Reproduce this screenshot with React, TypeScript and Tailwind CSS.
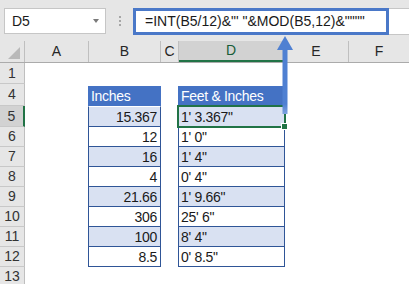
const font = "font-['Liberation_Sans',Arial,sans-serif]";

type Row = {
  label: string;
  h: string;
  b?: string;
  d?: string;
  shade?: boolean;
  kind?: "head" | "data" | "empty";
  first?: boolean;
  selected?: boolean;
};

const rows: Row[] = [
  { label: "1", h: "h-[21px]", kind: "empty" },
  { label: "4", h: "h-[22px]", kind: "head", b: "Inches", d: "Feet & Inches" },
  { label: "5", h: "h-[21px]", kind: "data", b: "15.367", d: "1' 3.367\"", shade: true, first: true, selected: true },
  { label: "6", h: "h-[20px]", kind: "data", b: "12", d: "1' 0\"" },
  { label: "7", h: "h-[20px]", kind: "data", b: "16", d: "1' 4\"", shade: true },
  { label: "8", h: "h-[20px]", kind: "data", b: "4", d: "0' 4\"" },
  { label: "9", h: "h-[20px]", kind: "data", b: "21.66", d: "1' 9.66\"", shade: true },
  { label: "10", h: "h-[20px]", kind: "data", b: "306", d: "25' 6\"" },
  { label: "11", h: "h-[20px]", kind: "data", b: "100", d: "8' 4\"", shade: true },
  { label: "12", h: "h-[20px]", kind: "data", b: "8.5", d: "0' 8.5\"" },
  { label: "13", h: "h-[20px]", kind: "empty" },
];

function TableCell({ row, col }: { row: Row; col: "b" | "d" }) {
  const w = col === "b" ? "w-[73px]" : "w-[107px]";
  if (row.kind === "head") {
    return (
      <div className={`${w} h-full flex flex-col justify-end`}>
        <div className="h-[20px] bg-[#4472c4] text-white pl-[3px] flex items-center pt-[1px] tracking-[-0.3px]">
          {col === "b" ? row.b : row.d}
        </div>
      </div>
    );
  }
  const bg = row.shade ? "bg-[#d9e1f2]" : "bg-white";
  const top = row.first ? "border-t border-t-white" : "";
  const align = col === "b" ? "justify-end pr-[3px]" : "justify-start pl-[2px]";
  return (
    <div
      className={`${w} h-full ${bg} ${top} border-x border-b border-[#2f5597] flex items-center pt-[2px] tracking-[-0.3px] ${align}`}
    >
      {col === "b" ? row.b : row.d}
    </div>
  );
}

export default function App() {
  return (
    <div className={`relative w-[409px] h-[284px] overflow-hidden bg-white text-[14px] text-[#1a1a1a] ${font}`}>
      {/* Formula bar */}
      <div className="h-[41px] bg-[#e6e6e6] flex items-start pt-[8px] pl-[4px]">
        <div className="w-[102px] h-[26px] bg-white border border-[#c6c6c6] flex items-center justify-between pl-[7px] pr-[6px]">
          <span className="pt-[1px]">D5</span>
          <span className="w-0 h-0 border-x-[3px] border-x-transparent border-t-[4px] border-t-[#7a7a7a]" />
        </div>
        <div className="w-[27px] flex flex-col items-center gap-[2px] pt-[8px]">
          <span className="w-[2px] h-[2px] bg-[#a6a6a6]" />
          <span className="w-[2px] h-[2px] bg-[#a6a6a6]" />
          <span className="w-[2px] h-[2px] bg-[#a6a6a6]" />
        </div>
        <div className="flex-1 h-[27px] bg-white border-y border-[#c6c6c6] flex">
          <div className="w-[256px] h-[27px] -mt-px border-[3px] border-[#4a78c8] flex items-center pl-[9px] whitespace-nowrap">
            =INT(B5/12)&amp;"' "&amp;MOD(B5,12)&amp;""""
          </div>
        </div>
      </div>

      {/* Column headers */}
      <div className="h-[22px] flex bg-[#e6e6e6] border-b border-[#ababab] text-[#262626]">
        <div className="w-[25px] h-full border-r border-[#bfbfbf] flex items-end justify-end pr-[3px] pb-[2px]">
          <svg width="13" height="13" viewBox="0 0 13 13">
            <polygon points="12,0 12,12 0,12" fill="#b9b9b9" />
          </svg>
        </div>
        <div className="w-[64px] border-r border-[#bfbfbf] flex items-center justify-center">A</div>
        <div className="w-[72px] border-r border-[#bfbfbf] flex items-center justify-center">B</div>
        <div className="w-[18px] border-r border-[#bfbfbf] flex items-center justify-center">C</div>
        <div className="w-[105px] border-r border-[#bfbfbf] bg-[#d2d2d2] border-b-2 border-b-[#217346] flex items-center justify-center text-[#185c37]">
          D
        </div>
        <div className="w-[65px] border-r border-[#bfbfbf] flex items-center justify-center">E</div>
        <div className="flex-1 flex items-center justify-center">F</div>
      </div>

      {/* Grid rows */}
      {rows.map((row) => (
        <div key={row.label} className={`${row.h} flex`}>
          <div
            className={`w-[25px] h-full border-b border-[#c8c8c8] flex items-center justify-center text-[#333] ${
              row.selected
                ? "bg-[#d2d2d2] border-r-2 border-r-[#217346] text-[#185c37]"
                : "bg-[#e6e6e6] border-r border-r-[#bfbfbf]"
            }`}
          >
            {row.label}
          </div>
          <div className="w-[63px]" />
          {row.kind === "empty" ? <div className="w-[73px]" /> : <TableCell row={row} col="b" />}
          <div className="w-[17px]" />
          {row.kind === "empty" ? <div className="w-[107px]" /> : <TableCell row={row} col="d" />}
          <div className="flex-1" />
        </div>
      ))}

      {/* Active cell outline */}
      <div className="absolute left-[177px] top-[105px] w-[109px] h-[23px] border-2 border-[#217346] pointer-events-none" />
      <div className="absolute left-[281px] top-[123px] w-[7px] h-[7px] bg-[#217346] border border-white" />

      {/* Callout arrow */}
      <svg className="absolute left-0 top-0" width="409" height="284" viewBox="0 0 409 284">
        <defs>
          <linearGradient id="shaft" x1="0" y1="0" x2="0" y2="1">
            <stop offset="0.85" stopColor="#4f80d2" />
            <stop offset="1" stopColor="#7fa3e0" />
          </linearGradient>
        </defs>
        <rect x="282.5" y="48" width="5" height="66" fill="url(#shaft)" />
        <polygon points="285,36 293,50 277,50" fill="#4f80d2" />
      </svg>
    </div>
  );
}
